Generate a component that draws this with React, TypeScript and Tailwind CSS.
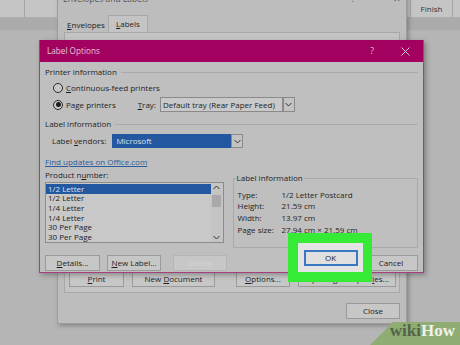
import React from "react";

const font = { fontFamily: '"Open Sans", "Noto Sans", sans-serif' };

function Btn({ children, className = "" }: { children: React.ReactNode; className?: string }) {
  return (
    <div
      className={`h-[16px] flex items-center justify-center border border-[#9a9a9a] bg-[#c7c7c7] text-[8px] text-[#1e1e1e] ${className}`}
    >
      {children}
    </div>
  );
}

function Radio({ on }: { on?: boolean }) {
  return (
    <div className="w-[10px] h-[10px] rounded-full border border-[#2a2a2a] bg-[#c9c9c9] flex items-center justify-center">
      {on && <div className="w-[5px] h-[5px] rounded-full bg-[#1e1e1e]" />}
    </div>
  );
}

function Heading({ text }: { text: string }) {
  return (
    <div className="flex items-center h-[12px] gap-[4px]">
      <span className="text-[8px] text-[#1e1e1e]">{text}</span>
      <div className="flex-1 border-t border-[#aaaaaa]" />
    </div>
  );
}

function DropArrow() {
  return (
    <div className="w-[12px] h-full border border-[#8a8a8a] bg-[#c3c3c3] flex items-center justify-center">
      <svg width="7" height="5" viewBox="0 0 7 5">
        <path d="M0.5 1 L3.5 4 L6.5 1" fill="none" stroke="#333" strokeWidth="1" />
      </svg>
    </div>
  );
}

const products = ["1/2 Letter", "1/2 Letter", "1/4 Letter", "1/4 Letter", "30 Per Page", "30 Per Page"];

const info = [
  ["Type:", "1/2 Letter Postcard"],
  ["Height:", "21.59 cm"],
  ["Width:", "13.97 cm"],
  ["Page size:", "27.94 cm × 21.59 cm"],
];

export default function App() {
  return (
    <div className="relative w-[460px] h-[345px] overflow-hidden bg-[#b5b5b5]" style={font}>
      {/* ribbon behind */}
      <div className="h-[17px] bg-[#c5c5c5] flex">
        <div className="w-[25px] border-r border-[#a5a5a5]" />
        <div className="flex-1" />
        <div className="w-[43px] border-l border-r border-[#a5a5a5] flex items-end justify-center pb-[2px] text-[8px] text-[#333]">
          Finish
        </div>
        <div className="w-[7px]" />
      </div>
      <div className="h-[13px] bg-[#ababab]" />

      {/* Envelopes and Labels dialog */}
      <div className="absolute left-[57px] top-[-8px] w-[350px] h-[332px] bg-[#bdbdbd] border border-[#9c9c9c] shadow-[2px_2px_4px_rgba(0,0,0,0.25)] flex flex-col">
        <div className="h-[13px] flex items-center px-[5px] text-[8.5px] text-[#555]">
          <span>Envelopes and Labels</span>
          <span className="ml-auto mr-[38px]">?</span>
          <span>✕</span>
        </div>
        <div className="flex mt-[9px] ml-[6px] h-[17px] items-end">
          <div className="w-[44px] h-[15px] flex items-center justify-center text-[8px] text-[#1e1e1e]">
            <span><u>E</u>nvelopes</span>
          </div>
          <div className="w-[40px] h-[17px] bg-[#c4c4c4] border border-b-0 border-[#a8a8a8] flex items-center justify-center text-[8px] text-[#1e1e1e]">
            <span><u>L</u>abels</span>
          </div>
        </div>
        <div className="mx-[6px] h-[261px] bg-[#c4c4c4] border border-[#a8a8a8] flex flex-col justify-end pb-[5px]">
          <div className="flex items-center gap-[8px] pl-[4px]">
            <Btn className="w-[55px] h-[14px]"><span><u>P</u>rint</span></Btn>
            <Btn className="w-[83px] h-[14px]"><span>New <u>D</u>ocument</span></Btn>
            <Btn className="w-[54px] h-[14px] ml-[13px] border-[#2b5fa8]"><span><u>O</u>ptions...</span></Btn>
            <Btn className="w-[98px] h-[14px]"><span>E-postage Propert<u>i</u>es...</span></Btn>
          </div>
        </div>
        <div className="flex justify-end mr-[6px] mt-[10px]">
          <Btn className="w-[54px]">Close</Btn>
        </div>
      </div>

      {/* Label Options dialog */}
      <div className="absolute left-[39px] top-[40px] w-[385px] h-[233px] bg-[#bfbfbf] border border-[#a3417c] border-t-0 shadow-[2px_2px_5px_rgba(0,0,0,0.3)] flex flex-col">
        <div className="h-[22px] bg-[#a2015f] flex items-center pl-[7px] text-[8.2px] text-[#e6c6d7]">
          <span>Label Options</span>
          <span className="ml-auto mr-[27px] text-[8.5px]">?</span>
          <svg width="9" height="9" viewBox="0 0 9 9" className="mr-[13px]">
            <path d="M0.5 0.5 L8.5 8.5 M8.5 0.5 L0.5 8.5" stroke="#e6c6d7" strokeWidth="1" />
          </svg>
        </div>

        <div className="flex flex-col px-[5px]">
          <div className="mt-[4px]">
            <Heading text="Printer information" />
          </div>
          <div className="mt-[4px] ml-[8px] flex items-center h-[12px] gap-[3px] text-[8px] text-[#1e1e1e]">
            <Radio />
            <span><u>C</u>ontinuous-feed printers</span>
          </div>
          <div className="mt-[3px] ml-[8px] flex items-center h-[15px] text-[8px] text-[#1e1e1e]">
            <Radio on />
            <span className="ml-[3px]">Pa<u>g</u>e printers</span>
            <span className="ml-[22px]"><u>T</u>ray:</span>
            <div className="ml-[4px] flex h-[15px]">
              <div className="w-[123px] h-full border border-[#8a8a8a] bg-[#c9c9c9] flex items-center pl-[2px]">
                Default tray (Rear Paper Feed)
              </div>
              <DropArrow />
            </div>
          </div>
          <div className="mt-[6px]">
            <Heading text="Label information" />
          </div>
          <div className="mt-[4px] ml-[7px] flex items-center h-[14px] text-[8px] text-[#1e1e1e]">
            <span>Label <u>v</u>endors:</span>
            <div className="ml-[6px] flex h-[14px]">
              <div className="w-[119px] h-full bg-[#23579f] border border-[#23579f] flex items-center pl-[3px] text-[#dde4ee]">
                Microsoft
              </div>
              <DropArrow />
            </div>
          </div>
          <div className="mt-[8px] h-[12px] flex items-center text-[8px] text-[#2b5d9e] underline">
            Find updates on Office.com
          </div>
          <div className="mt-[1px] h-[12px] flex items-center text-[8px] text-[#1e1e1e]">
            <span>Product n<u>u</u>mber:</span>
          </div>

          <div className="flex mt-[-3px] gap-[9px]">
            {/* listbox */}
            <div className="mt-[4px] w-[180px] h-[61px] border border-[#8c8c8c] bg-[#c8c8c8] flex">
              <div className="flex-1 flex flex-col pt-[1px]">
                {products.map((p, i) => (
                  <div
                    key={i}
                    className={`h-[9.6px] flex items-center pl-[2px] text-[8px] ${
                      i === 0 ? "bg-[#23579f] text-[#dde4ee]" : "text-[#1e1e1e]"
                    }`}
                  >
                    {p}
                  </div>
                ))}
              </div>
              <div className="w-[12px] flex flex-col items-center bg-[#c4c4c4]">
                <svg width="7" height="10" viewBox="0 0 7 10">
                  <path d="M0.5 6 L3.5 3 L6.5 6" fill="none" stroke="#333" strokeWidth="1" />
                </svg>
                <div className="w-[9px] h-[12px] mt-[2px] bg-[#a9a9a9]" />
                <div className="flex-1" />
                <svg width="7" height="10" viewBox="0 0 7 10">
                  <path d="M0.5 4 L3.5 7 L6.5 4" fill="none" stroke="#333" strokeWidth="1" />
                </svg>
              </div>
            </div>
            {/* label info group */}
            <div className="relative w-[187px] h-[70px] border border-[#a9a9a9] flex flex-col pt-[10px] pl-[4px] text-[8px] text-[#1e1e1e]">
              <span className="absolute top-[-7px] left-[2px] px-[1px] bg-[#bfbfbf]">Label information</span>
              {info.map(([k, v]) => (
                <div key={k} className="flex h-[11.6px] items-center">
                  <span className="w-[44px]">{k}</span>
                  <span>{v}</span>
                </div>
              ))}
            </div>
          </div>

          <div className="mt-[7px] flex items-center">
            <Btn className="w-[55px]"><span><u>D</u>etails...</span></Btn>
            <Btn className="w-[54px] ml-[7px]"><span><u>N</u>ew Label...</span></Btn>
            <Btn className="w-[54px] ml-[12px] bg-[#bcbcbc] border-[#b5b5b5] text-[#d4d4d4]">Delete</Btn>
            <Btn className="w-[54px] ml-auto"><span>Cancel</span></Btn>
          </div>
        </div>
      </div>

      {/* green highlight around OK */}
      <div className="absolute left-[288px] top-[233px] w-[84px] h-[49px] bg-[#36ea36] p-[10px] pr-[9px]">
        <div className="w-full h-full bg-[#e4e4e4] flex items-center justify-center">
          <div className="w-[54px] h-[16px] border-2 border-[#3a78c4] bg-[#e0e0e0] flex items-center justify-center text-[8px] text-[#1a1a1a]">
            OK
          </div>
        </div>
      </div>

      {/* wikiHow mark */}
      <div className="absolute right-[-10px] bottom-0 w-[100px] h-[23px] bg-[#8fad72] skew-x-[-45deg] origin-bottom-left" />
      <div className="absolute right-[5px] bottom-[2px] text-[17px] font-bold" style={{ fontFamily: '"Liberation Serif", "DejaVu Serif", serif' }}>
        <span className="text-[#55634a]">wiki</span>
        <span className="text-[#eef2ea]">How</span>
      </div>
    </div>
  );
}
